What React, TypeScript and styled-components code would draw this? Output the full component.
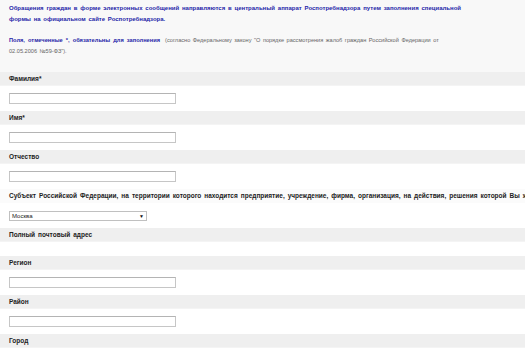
import React from 'react'
import styled, { createGlobalStyle } from 'styled-components'

const GlobalStyle = createGlobalStyle`
  html, body {
    margin: 0;
    padding: 0;
    background: #f8f8f8;
    font-family: "Liberation Sans", Arial, sans-serif;
    overflow: hidden;
  }
`

const Page = styled.div`
  width: 525px;
  height: 350px;
  overflow: hidden;
`

const Intro = styled.div`
  padding: 3px 0 0 9px;
  width: 452px;
  height: 69px;
  box-sizing: content-box;
`

const Notice = styled.p`
  margin: 0;
  font-size: 6px;
  line-height: 11px;
  font-weight: bold;
  color: #2626a8;
  text-align: justify;
  word-spacing: 1px;
`

const Required = styled.p`
  margin: 10px 0 0;
  font-size: 5.6px;
  line-height: 11px;
  color: #666;
  word-spacing: 1px;
`

const Blue = styled.span`
  font-size: 5.7px;
  font-weight: bold;
  color: #2626a8;
  word-spacing: 1.5px;
`

const Band = styled.div<{ $plain?: boolean }>`
  height: 14px;
  line-height: 14px;
  padding-left: 9px;
  background: ${p => (p.$plain ? '#fbfbfb' : '#efefef')};
  border-bottom: 1px solid ${p => (p.$plain ? '#fbfbfb' : '#f4f4f4')};
  box-sizing: border-box;
  font-size: 6.5px;
  font-weight: bold;
  word-spacing: 1.2px;
  color: #222;
  white-space: nowrap;
  overflow: hidden;
`

const Row = styled.div<{ $empty?: boolean }>`
  height: ${p => (p.$empty ? 14 : 25)}px;
  background: #fff;
  padding: 7px 0 0 9px;
  box-sizing: border-box;
`

const TextInput = styled.div`
  width: 167px;
  height: 11px;
  border: 1px solid #c6c6c6;
  border-top-color: #b4b4b4;
  background: #fff;
  box-sizing: border-box;
`

const Select = styled.div`
  width: 138px;
  height: 10px;
  margin-top: 1px;
  border: 1px solid #c0c0c0;
  background: #fff;
  box-sizing: border-box;
  display: flex;
  align-items: center;
  justify-content: space-between;
  padding: 0 2px 0 2px;
  font-size: 6px;
  color: #222;
`

const Caret = styled.span`
  font-size: 5px;
  color: #111;
`

type Field = { label: string; kind: 'input' | 'select' | 'none'; plain?: boolean }

const fields: Field[] = [
  { label: 'Фамилия*', kind: 'input' },
  { label: 'Имя*', kind: 'input' },
  { label: 'Отчество', kind: 'input' },
  {
    label:
      'Субъект Российской Федерации, на территории которого находится предприятие, учреждение, фирма, организация, на действия, решения которой Вы жалуетесь*',
    kind: 'select',
    plain: true,
  },
  { label: 'Полный почтовый адрес', kind: 'none' },
  { label: 'Регион', kind: 'input' },
  { label: 'Район', kind: 'input' },
  { label: 'Город', kind: 'input' },
]

export default function App() {
  return (
    <Page>
      <GlobalStyle />
      <Intro>
        <Notice>
          Обращения граждан в форме электронных сообщений направляются в центральный аппарат
          Роспотребнадзора путем заполнения специальной формы на официальном сайте Роспотребнадзора.
        </Notice>
        <Required>
          <Blue>Поля, отмеченные *, обязательны для заполнения</Blue>&nbsp; (согласно Федеральному
          закону "О порядке рассмотрения жалоб граждан Российской Федерации от 02.05.2006 №59-ФЗ").
        </Required>
      </Intro>
      {fields.map(f => (
        <React.Fragment key={f.label}>
          <Band $plain={f.plain}>{f.label}</Band>
          <Row $empty={f.kind === 'none'}>
            {f.kind === 'input' && <TextInput />}
            {f.kind === 'select' && (
              <Select>
                Москва
                <Caret>▼</Caret>
              </Select>
            )}
          </Row>
        </React.Fragment>
      ))}
    </Page>
  )
}
